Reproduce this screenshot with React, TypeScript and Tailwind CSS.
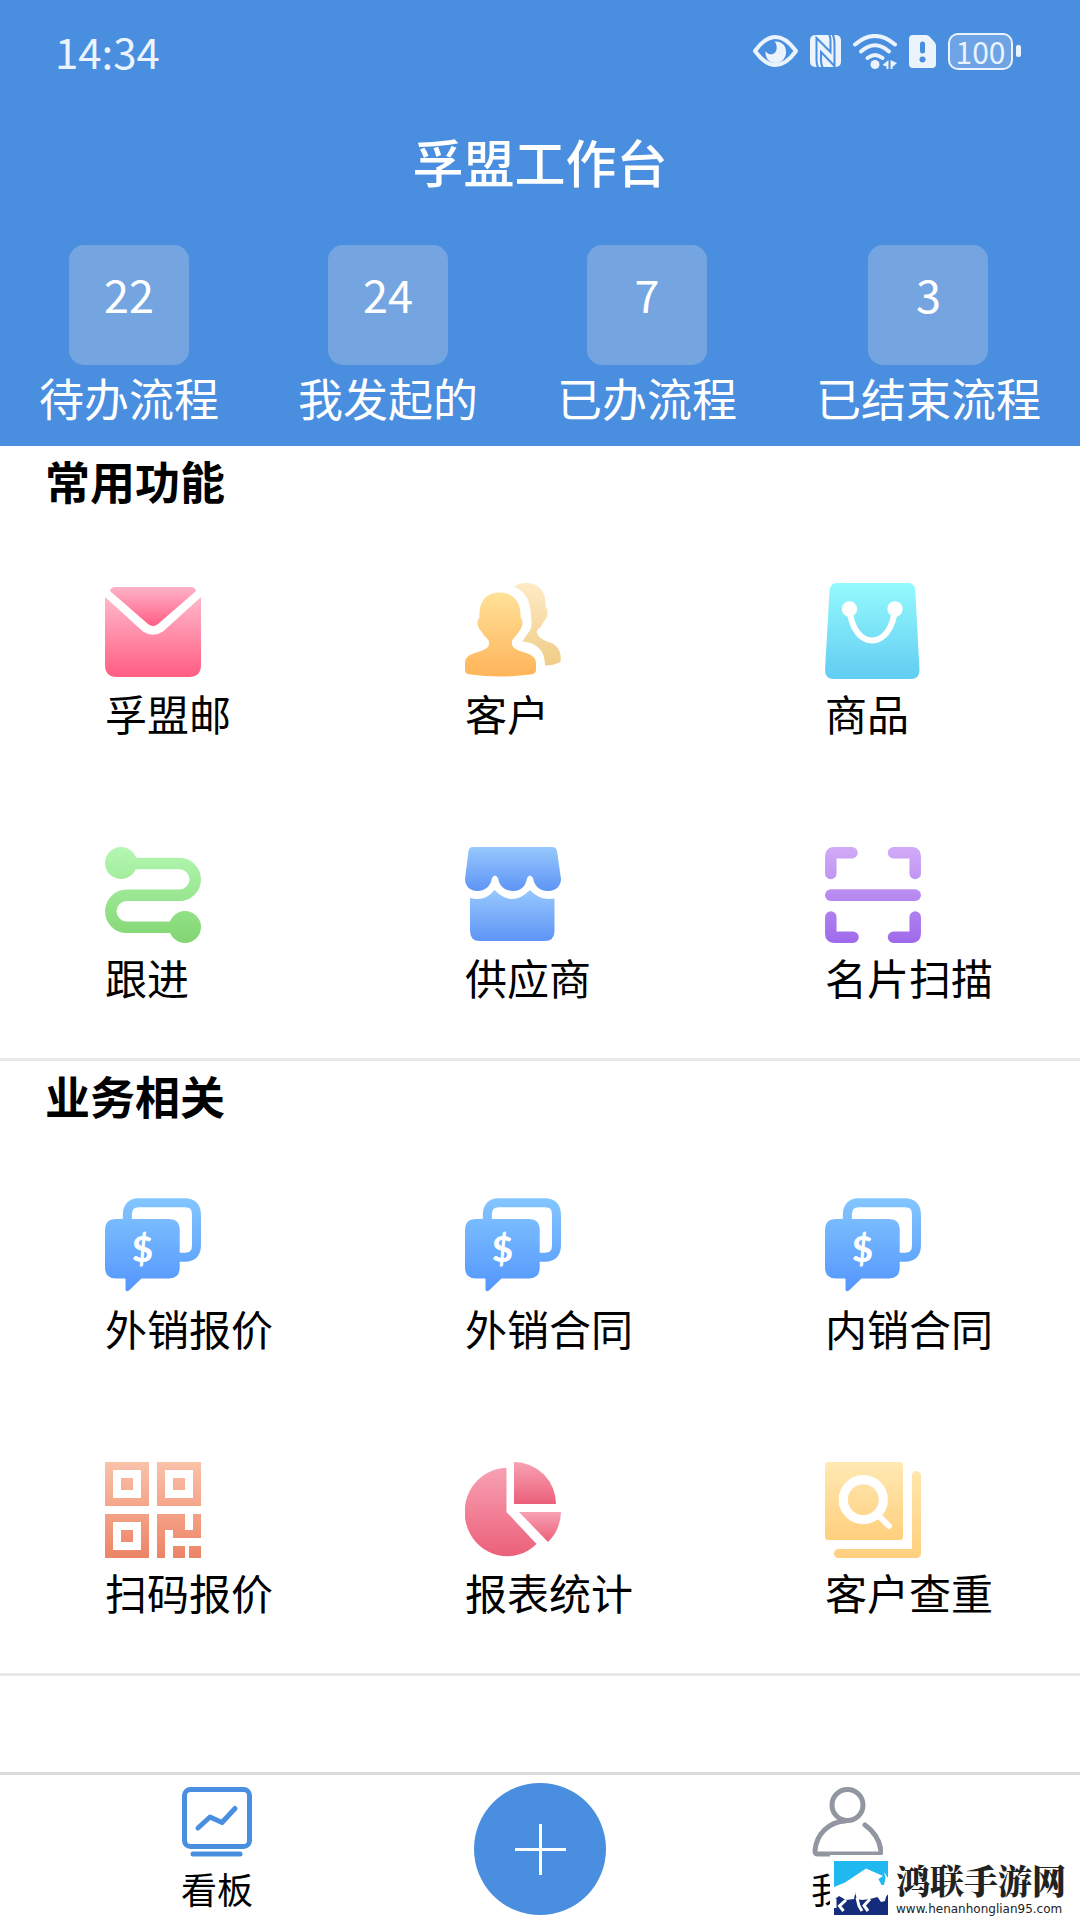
import type { ReactNode } from "react";

type Stops = [string, string];

function Gradient({ id, stops, height }: { id: string; stops: Stops; height?: number }) {
  return height ? (
    <linearGradient id={id} gradientUnits="userSpaceOnUse" x1="0" y1="0" x2="0" y2={height}>
      <stop offset="0" stopColor={stops[0]} />
      <stop offset="1" stopColor={stops[1]} />
    </linearGradient>
  ) : (
    <linearGradient id={id} x1="0" y1="0" x2="0" y2="1">
      <stop offset="0" stopColor={stops[0]} />
      <stop offset="1" stopColor={stops[1]} />
    </linearGradient>
  );
}

function Icon({ children }: { children: ReactNode }) {
  return (
    <svg viewBox="0 0 96 96" className="block size-24" aria-hidden="true">
      {children}
    </svg>
  );
}

const MailIcon = () => (
  <Icon>
    <defs>
      <Gradient id="mail-body" stops={["#ffb8cb", "#ff5d82"]} />
      <Gradient id="mail-flap" stops={["#ffb3c8", "#ff5d84"]} />
    </defs>
    <path fill="url(#mail-flap)" d="M5 8Q6 4 10 4H86Q90 4 91 8L53 41Q48 45 43 41Z" />
    <path fill="url(#mail-body)" d="M0 14L38 48.500Q48 55 58 48.500L96 14V82Q96 94 84 94H12Q0 94 0 82Z" />
  </Icon>
);

const CustomerIcon = () => (
  <Icon>
    <defs>
      <Gradient id="cust-front" stops={["#ffe198", "#ffb45a"]} />
      <Gradient id="cust-back" stops={["#feeac4", "#f0cd87"]} />
    </defs>
    <path
      fill="url(#cust-back)"
      d="M49 3.500Q54 0 61 0C74 0 81 9 80.5 22C80.500 25 82.500 25 82.500 30C82.500 36 79 37 77 42C75 46 71 46 72 50C75 59 87 58 92 64C96 69 96 74 95.500 79Q88 82.500 80 82.500C80 68 73 60 57.500 58.500C62 50 67 48 66.500 40C66 20 63 10 49 3.500Z"
    />
    <path
      fill="url(#cust-front)"
      d="M34.5 9.5C48 9.5 56 19 55.5 33C55.5 36 57.5 36 57.5 40C57.5 44 55 47 53 50C50 55 46 56 47 61C48 71 71 67 71 80V87Q71 90.5 67 91.300Q52 93.5 35.5 93.5Q19 93.5 4 91.300Q0 90.5 0 87V80C0 67 23 71 24 61C25 56 20 55 17.5 50C15 47 12.5 44 12.5 40C12.5 36 14.5 36 14.5 33C14 19 21 9.5 34.5 9.5Z"
    />
  </Icon>
);

const BagIcon = () => (
  <Icon>
    <defs>
      <Gradient id="bag" stops={["#95fafd", "#62ccf2"]} />
    </defs>
    <path fill="url(#bag)" d="M12 0H83Q90 0 90.300 8L94.5 87Q94.5 96 86 96H9Q0 96 0 87L4.5 8Q5 0 12 0Z" />
    <circle cx="24.5" cy="26" r="7.700" fill="#fff" />
    <circle cx="70" cy="26" r="7.700" fill="#fff" />
    <path d="M24.500 26C28 68 66 68 70 26" fill="none" stroke="#fff" strokeWidth="6" />
  </Icon>
);

const FollowIcon = () => (
  <Icon>
    <defs>
      <Gradient id="follow" stops={["#b4f8b4", "#82d571"]} height={96} />
    </defs>
    <path
      d="M16 16.500H74.300A15.900 15.900 0 0 1 74.300 48.300H21.800A16 16 0 0 0 21.800 80.300H80"
      fill="none"
      stroke="url(#follow)"
      strokeWidth="11.500"
    />
    <circle cx="16" cy="16" r="16" fill="url(#follow)" />
    <circle cx="80" cy="80" r="16" fill="url(#follow)" />
  </Icon>
);

const ShopIcon = () => (
  <Icon>
    <defs>
      <Gradient id="shop-roof" stops={["#97c8fd", "#5e94f6"]} />
      <Gradient id="shop-body" stops={["#97c8fd", "#5e94f6"]} />
    </defs>
    <path
      fill="url(#shop-roof)"
      d="M8 0H87Q91.500 0 92 4L96 32C96 39 91 44 83 44C74 44 69 38 68 31Q65 26 62 31C61 38 57 44 48 44C39 44 34 38 33 31Q30 26 27 31C26 38 21 44 12 44C5 44 0 39 0 32L3.500 4Q4 0 8 0Z"
    />
    <path
      fill="url(#shop-body)"
      d="M5 51Q20 55 29.600 43Q47 61 65 43Q75 54 89.500 51.500V84Q89.500 94 79.500 94H15Q5 94 5 84Z"
    />
  </Icon>
);

const ScanIcon = () => (
  <Icon>
    <defs>
      <Gradient id="scan" stops={["#d1abf8", "#9f6aea"]} height={96} />
    </defs>
    <g fill="none" stroke="url(#scan)" strokeWidth="11.500" strokeLinecap="round" strokeLinejoin="round">
      <path d="M5.800 26.500V9Q5.800 5.800 9 5.800H27" />
      <path d="M90.200 26.500V9Q90.200 5.800 87 5.800H68.500" />
      <path d="M5.800 70V87Q5.800 90.200 9 90.200H28" />
      <path d="M90.200 70V87Q90.200 90.200 87 90.200H68.500" />
    </g>
    <rect x="0" y="42.200" width="96" height="11.800" rx="5.900" fill="url(#scan)" />
  </Icon>
);

function MoneyIcon({ id }: { id: string }) {
  return (
    <Icon>
      <defs>
        <Gradient id={id} stops={["#84c6ff", "#5396fc"]} height={94} />
      </defs>
      <path
        d="M22.300 24V17Q22.300 4.700 34 4.700H80Q91.500 4.700 91.500 17V47Q91.500 59.200 80 59.200H72"
        fill="none"
        stroke={`url(#${id})`}
        strokeWidth="9"
      />
      <path
        fill={`url(#${id})`}
        d="M11 21H63.700Q74.700 21 74.700 32V69.500Q74.700 80.500 63.700 80.500H36.500L24 92.500Q20.500 94.500 20.500 91V80.500H11Q0 80.500 0 69.500V32Q0 21 11 21Z"
      />
      <text x="37.500" y="63.500" textAnchor="middle" fill="#fff" fontFamily="Lato" fontWeight="900" fontSize="36">
        $
      </text>
    </Icon>
  );
}

const QrIcon = () => (
  <Icon>
    <defs>
      <Gradient id="qr" stops={["#fac2aa", "#ed8466"]} height={96} />
    </defs>
    <path
      fill="url(#qr)"
      fillRule="evenodd"
      d="M0 0H44V44H0ZM8 8V36H36V8ZM16 16H28V28H16ZM52 0H96V44H52ZM60 8V36H88V8ZM68 16H80V28H68ZM0 52H44V96H0ZM8 60V88H36V60ZM16 68H28V80H16ZM52 52H80V68H88V52H96V76H68V68H60V96H52ZM68 84H80V96H68ZM84 84H96V96H84Z"
    />
  </Icon>
);

const PieIcon = () => (
  <Icon>
    <defs>
      <Gradient id="pie" stops={["#f8a1b4", "#eb6079"]} />
    </defs>
    <path fill="url(#pie)" d="M41.500 5.700V50L71.500 82A42.500 44.300 0 1 1 41.500 5.700Z" />
    <path fill="url(#pie)" d="M49 0A42 42 0 0 1 91 42H49Z" />
    <path fill="url(#pie)" d="M54 50H96A44 44 0 0 1 83 80Z" />
  </Icon>
);

const DuplicateIcon = () => (
  <Icon>
    <defs>
      <Gradient id="dup" stops={["#ffe9b3", "#ffcf7d"]} />
      <Gradient id="dup-edge" stops={["#ffe9b3", "#ffcf7d"]} height={96} />
    </defs>
    <rect width="78" height="78" rx="3" fill="url(#dup)" />
    <circle cx="38.300" cy="37.700" r="20" fill="none" stroke="#fff" strokeWidth="9.200" />
    <path d="M52 52L64 64" stroke="#fff" strokeWidth="6" strokeLinecap="round" />
    <path
      d="M91.500 13.500V91.500H13.500"
      fill="none"
      stroke="url(#dup-edge)"
      strokeWidth="9"
      strokeLinecap="round"
      strokeLinejoin="round"
    />
  </Icon>
);

function StatusBar() {
  return (
    <div className="flex h-[102px] items-center justify-between pr-[59px] pl-[55px] text-[#ebf3fd]">
      <time className="text-[42px] leading-[48px]">14:34</time>
      <div className="flex items-center gap-3">
        <svg viewBox="0 0 45 32" className="h-8 w-[45px]" aria-label="护眼模式">
          <path d="M2 16Q12 2 22.500 2Q33 2 43 16Q33 30 22.500 30Q12 30 2 16Z" fill="none" stroke="currentColor" strokeWidth="4" strokeLinejoin="round" />
          <path d="M21.500 6.500C30 6 33.500 12 33 18C32.500 24 28 28 22.500 28C16 28 12 23 12.500 16C15 20 20 20.500 22.500 17C24.500 14 24 9 21.500 6.500Z" fill="currentColor" />
        </svg>
        <svg viewBox="0 0 31 32" className="h-8 w-[31px]" aria-label="NFC">
          <rect width="31" height="32" rx="5" fill="currentColor" />
          <path
            fill="none"
            stroke="#4a8ee0"
            strokeWidth="2"
            d="M8.500 33Q6.500 30 6.500 25V3L20.500 17V6Q20.500 2 19 -1M24.500 33V8Q24.500 3 22.500 -1M24.500 31L11 17V25Q11 30 13 33"
          />
        </svg>
        <svg viewBox="0 0 44 35" className="h-[35px] w-11" aria-label="无线网络">
          <g fill="none" stroke="currentColor" strokeWidth="4" strokeLinecap="round">
            <path d="M2 10.500Q22 -6.500 42 10.500" />
            <path d="M8 17.500Q22 5 36 17.500" />
            <path d="M14.500 24Q22 18 29.500 24" />
          </g>
          <circle cx="22" cy="30.500" r="4.500" fill="currentColor" />
          <path fill="currentColor" d="M35.500 26V35H33.500V32.500L29.500 31ZM37.500 26L44 29L39.500 33V35H37.500Z" />
        </svg>
        <svg viewBox="0 0 27 33" className="h-[33px] w-[27px]" aria-label="SIM 卡">
          <path fill="currentColor" d="M4 0H17Q19 0 20.500 1.500L25.500 7Q27 8.500 27 10.500V29Q27 33 23 33H4Q0 33 0 29V4Q0 0 4 0Z" />
          <path d="M13.500 9V16" stroke="#4a8ee0" strokeWidth="5" strokeLinecap="round" />
          <circle cx="13.500" cy="24.500" r="3" fill="#4a8ee0" />
        </svg>
        <div className="flex items-center gap-[3px]">
          <span className="flex h-[37px] w-[65px] items-center justify-center rounded-[10px] border-2 border-current bg-white/20 text-[30px] leading-[30px]">
            100
          </span>
          <span className="h-3 w-[5px] rounded-xs bg-current" />
        </div>
      </div>
    </div>
  );
}

const stats = [
  { count: 22, label: "待办流程" },
  { count: 24, label: "我发起的" },
  { count: 7, label: "已办流程" },
  { count: 3, label: "已结束流程" },
];

const common = [
  { label: "孚盟邮", icon: <MailIcon /> },
  { label: "客户", icon: <CustomerIcon /> },
  { label: "商品", icon: <BagIcon /> },
  { label: "跟进", icon: <FollowIcon /> },
  { label: "供应商", icon: <ShopIcon /> },
  { label: "名片扫描", icon: <ScanIcon /> },
];

const business = [
  { label: "外销报价", icon: <MoneyIcon id="money-quote" /> },
  { label: "外销合同", icon: <MoneyIcon id="money-export" /> },
  { label: "内销合同", icon: <MoneyIcon id="money-domestic" /> },
  { label: "扫码报价", icon: <QrIcon /> },
  { label: "报表统计", icon: <PieIcon /> },
  { label: "客户查重", icon: <DuplicateIcon /> },
];

function Section({ title, items }: { title: string; items: { label: string; icon: ReactNode }[] }) {
  return (
    <section className="border-b-[3px] border-[#e8e8e8] pt-1 pb-[49px]">
      <h2 className="px-[45px] text-[45px] leading-[62px] font-bold">{title}</h2>
      <div className="mt-[71px] grid grid-cols-3 gap-y-[104px]">
        {items.map((item) => (
          <button key={item.label} type="button" className="flex flex-col items-start gap-1 pl-[105px] text-left">
            {item.icon}
            <span className="text-[42px] leading-[60px] whitespace-nowrap">{item.label}</span>
          </button>
        ))}
      </div>
      <div className="h-[2px]" />
    </section>
  );
}

function Watermark() {
  return (
    <div className="absolute right-0 bottom-0 flex h-[65px] w-[250px] items-center gap-2 bg-white pl-1">
      <svg viewBox="0 0 54 54" className="size-[54px] shrink-0" aria-hidden="true">
        <rect width="54" height="54" fill="#1fb8f0" />
        <path fill="#152c7c" d="M0 34H54V54H0Z" />
        <path
          fill="#fff"
          d="M0 26L11 21.500L32 7.500L49 15L44.500 18L47.500 24L50 24L51.500 17L50 11L54 17V33L52 36L51 40L47 41L43.500 36L36 38L28 39L22.500 38L21.500 31L20 38L12 39L5 35L0 39Z"
        />
        <path d="M12 39L5.500 45L9.500 50M23 37L25 45L28 50M36 38L30 44.500L34 50M1 38V47" fill="none" stroke="#fff" strokeWidth="3" />
      </svg>
      <div className="flex flex-col whitespace-nowrap text-[#222]">
        <span className="font-['Noto_Serif_CJK_SC','Noto_Sans_CJK_SC',serif] text-[34px] leading-[42px] font-black">鸿联手游网</span>
        <span className="font-['DejaVu_Sans',sans-serif] text-[12px] leading-4">www.henanhonglian95.com</span>
      </div>
    </div>
  );
}

export default function App() {
  return (
    <div className="relative flex min-h-screen flex-col bg-white font-['Noto_Sans_CJK_SC',sans-serif] text-black">
      <header className="bg-[#4a8ee0] pb-[18px] text-white">
        <StatusBar />
        <h1 className="text-center text-[51px] leading-[118px] font-medium">孚盟工作台</h1>
        <div className="mt-[25px] flex justify-between px-[39px]">
          {stats.map((stat) => (
            <button key={stat.label} type="button" className="flex flex-col items-center gap-[3px]">
              <span className="h-[120px] w-[120px] rounded-[15px] bg-[#74a5e1] pt-5 text-center text-[45px] leading-[58px]">
                {stat.count}
              </span>
              <span className="text-[45px] leading-[60px] whitespace-nowrap">{stat.label}</span>
            </button>
          ))}
        </div>
      </header>

      <main>
        <Section title="常用功能" items={common} />
        <Section title="业务相关" items={business} />
      </main>

      <nav className="mt-auto grid h-[148px] grid-cols-[434fr_212fr_402fr] justify-items-center border-t-[3px] border-[#dcdcdc] pt-2 pr-8">
        <button type="button" className="flex flex-col items-center self-start pt-[3px]">
          <svg viewBox="0 0 72 72" className="size-[72px]" fill="none" stroke="#4a8ee0" strokeWidth="5" strokeLinecap="round" strokeLinejoin="round" aria-hidden="true">
            <rect x="3.500" y="3.500" width="65" height="57" rx="6" />
            <path d="M17 42L29 31L41 36.500L54 22.500M12 68H59" />
          </svg>
          <span className="text-[36px] leading-[60px]">看板</span>
        </button>
        <button type="button" aria-label="新建" className="flex size-[132px] items-center justify-center rounded-full bg-[#4a8ee0]">
          <svg viewBox="0 0 52 52" className="size-[52px]" stroke="#fff" strokeWidth="3" aria-hidden="true">
            <path d="M26.500 1V52M1 26.500H52" />
          </svg>
        </button>
        <button type="button" className="flex flex-col items-center self-start pt-[3px]">
          <svg viewBox="0 0 72 72" className="size-[72px]" fill="none" stroke="#9296a0" strokeWidth="5" strokeLinecap="round" strokeLinejoin="round" aria-hidden="true">
            <circle cx="36.500" cy="19" r="15.500" />
            <path d="M34 35C18 36 5 48 4 65Q4 68 7 68H67Q70 68 70 65Q68 49 54 39" />
          </svg>
          <span className="text-[36px] leading-[60px]">我的</span>
        </button>
      </nav>

      <Watermark />
    </div>
  );
}
